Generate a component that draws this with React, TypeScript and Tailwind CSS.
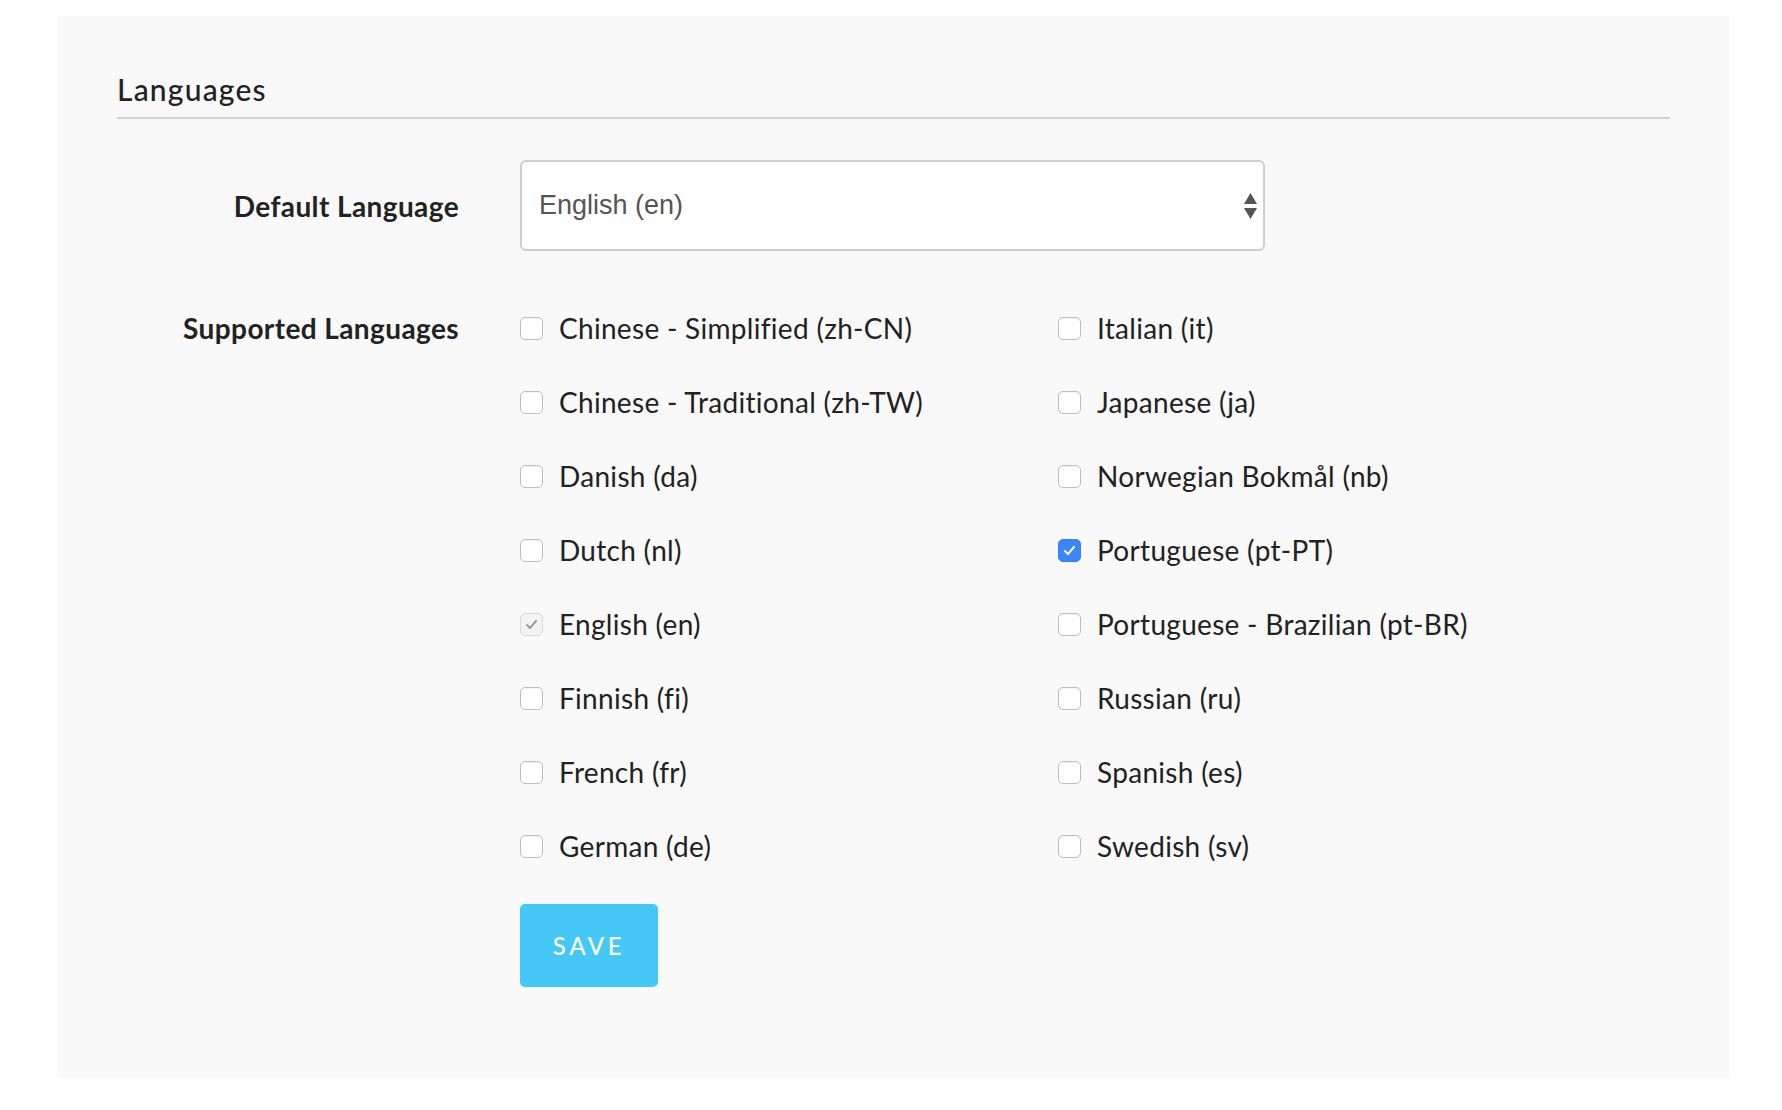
import React, { useState } from "react";

const LEFT = [
  { code: "zh-CN", name: "Chinese - Simplified (zh-CN)" },
  { code: "zh-TW", name: "Chinese - Traditional (zh-TW)" },
  { code: "da", name: "Danish (da)" },
  { code: "nl", name: "Dutch (nl)" },
  { code: "en", name: "English (en)" },
  { code: "fi", name: "Finnish (fi)" },
  { code: "fr", name: "French (fr)" },
  { code: "de", name: "German (de)" },
];

const RIGHT = [
  { code: "it", name: "Italian (it)" },
  { code: "ja", name: "Japanese (ja)" },
  { code: "nb", name: "Norwegian Bokmål (nb)" },
  { code: "pt-PT", name: "Portuguese (pt-PT)" },
  { code: "pt-BR", name: "Portuguese - Brazilian (pt-BR)" },
  { code: "ru", name: "Russian (ru)" },
  { code: "es", name: "Spanish (es)" },
  { code: "sv", name: "Swedish (sv)" },
];

const Check = ({ color }: { color: string }) => (
  <svg viewBox="0 0 16 16" className="w-[15px] h-[15px]" fill="none">
    <path
      d="M3.2 8.6 L6.4 11.8 L12.8 4.2"
      stroke={color}
      strokeWidth="2.2"
      strokeLinecap="round"
      strokeLinejoin="round"
    />
  </svg>
);

const Box = ({
  checked,
  disabled,
  onClick,
}: {
  checked: boolean;
  disabled?: boolean;
  onClick: () => void;
}) => {
  if (disabled) {
    return (
      <span className="w-[23px] h-[23px] rounded-[5px] border border-[#d9d9d9] bg-[#f3f3f3] flex items-center justify-center shrink-0">
        <Check color="#9a9a9a" />
      </span>
    );
  }
  if (checked) {
    return (
      <span
        onClick={onClick}
        className="w-[23px] h-[23px] rounded-[5px] bg-[#3b86f6] border border-[#3580ee] flex items-center justify-center shrink-0 cursor-pointer"
      >
        <Check color="#ffffff" />
      </span>
    );
  }
  return (
    <span
      onClick={onClick}
      className="w-[23px] h-[23px] rounded-[5px] border border-[#bdbdbd] bg-white shadow-[inset_0_1px_1px_rgba(0,0,0,0.04)] shrink-0 cursor-pointer"
    />
  );
};

export default function App() {
  const [selected, setSelected] = useState<string[]>(["en", "pt-PT"]);

  const toggle = (code: string) => {
    setSelected((s) =>
      s.includes(code) ? s.filter((c) => c !== code) : [...s, code]
    );
  };

  const renderCol = (items: { code: string; name: string }[]) => (
    <div className="flex flex-col w-[538px]">
      {items.map((l) => (
        <label
          key={l.code}
          className="h-[74px] flex items-center gap-[16px] text-[28px] tracking-[0.3px] text-[#222]"
        >
          <Box
            checked={selected.includes(l.code)}
            disabled={l.code === "en"}
            onClick={() => toggle(l.code)}
          />
          <span>{l.name}</span>
        </label>
      ))}
    </div>
  );

  return (
    <div className="min-h-[1110px] bg-white pt-[16px] pl-[57px] font-['Lato','Noto_Sans',sans-serif]">
      <div className="w-[1673px] h-[1062px] bg-[#f9f9f9] pl-[60px] pr-[60px] pt-[55px]">
        <h2 className="text-[30px] leading-[36px] font-medium tracking-[1.2px] text-[#222] pb-[10px] border-b-2 border-[#d2d2d2]">
          Languages
        </h2>

        <div className="flex items-center mt-[41px]">
          <div className="w-[342px] text-right text-[28px] tracking-[0.4px] font-bold text-[#222]">
            Default Language
          </div>
          <div className="ml-[61px] relative w-[745px] h-[91px] bg-white border-2 border-[#cfcfcf] rounded-[6px] flex items-center pl-[17px]">
            <span className="font-['Liberation_Sans',Arial,sans-serif] text-[27px] text-[#555]">
              English (en)
            </span>
            <svg
              viewBox="0 0 13 26"
              className="absolute right-[6px] top-1/2 -translate-y-1/2 w-[13px] h-[26px]"
            >
              <path d="M6.5 0 L13 11 L0 11 Z" fill="#555" />
              <path d="M0 15 L13 15 L6.5 26 Z" fill="#555" />
            </svg>
          </div>
        </div>

        <div className="flex mt-[40px]">
          <div className="w-[342px] text-right text-[28px] tracking-[0.4px] font-bold text-[#222] h-[74px] flex items-center justify-end">
            Supported Languages
          </div>
          <div className="ml-[61px]">
            <div className="flex">
              {renderCol(LEFT)}
              {renderCol(RIGHT)}
            </div>
            <button className="mt-[21px] w-[138px] h-[83px] rounded-[5px] bg-[#45c8f5] text-white text-[24px] font-medium tracking-[3.6px]">
              SAVE
            </button>
          </div>
        </div>
      </div>
    </div>
  );
}
